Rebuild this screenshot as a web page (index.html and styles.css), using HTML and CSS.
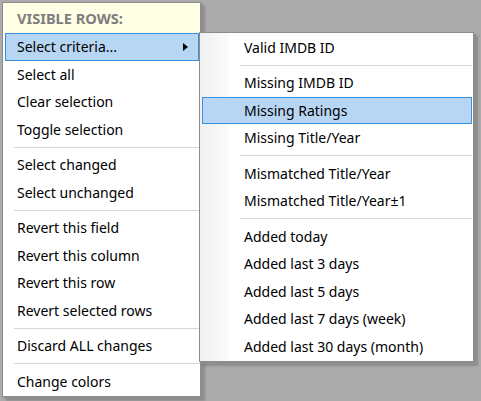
FILE: index.html
```html
<!DOCTYPE html>
<html>
<head>
<meta charset="utf-8">
<link rel="stylesheet" href="styles.css">
</head>
<body>
<div class="menu main">
  <div class="header">VISIBLE ROWS:</div>
  <div class="item active has-sub">
    <span>Select criteria...</span>
    <svg class="chev" width="5" height="8" viewBox="0 0 5 8"><path d="M0 0 L5 4 L0 8 Z" fill="#000"/></svg>
    <div class="menu sub">
      <div class="item">Valid IMDB ID</div>
      <div class="sep"></div>
      <div class="item">Missing IMDB ID</div>
      <div class="item hover">Missing Ratings</div>
      <div class="item">Missing Title/Year</div>
      <div class="sep"></div>
      <div class="item">Mismatched Title/Year</div>
      <div class="item">Mismatched Title/Year±1</div>
      <div class="sep"></div>
      <div class="item">Added today</div>
      <div class="item">Added last 3 days</div>
      <div class="item">Added last 5 days</div>
      <div class="item">Added last 7 days (week)</div>
      <div class="item">Added last 30 days (month)</div>
    </div>
  </div>
  <div class="item">Select all</div>
  <div class="item">Clear selection</div>
  <div class="item">Toggle selection</div>
  <div class="sep"></div>
  <div class="item">Select changed</div>
  <div class="item">Select unchanged</div>
  <div class="sep"></div>
  <div class="item">Revert this field</div>
  <div class="item">Revert this column</div>
  <div class="item">Revert this row</div>
  <div class="item">Revert selected rows</div>
  <div class="sep"></div>
  <div class="item">Discard ALL changes</div>
  <div class="sep"></div>
  <div class="item">Change colors</div>
</div>
</body>
</html>
```
FILE: styles.css
```css
html, body {
  margin: 0;
  padding: 0;
  background: #ababab;
  width: 481px;
  height: 401px;
  overflow: hidden;
}
body {
  padding: 2px 0 0 2px;
  box-sizing: border-box;
  font-family: "Noto Sans", "Open Sans", sans-serif;
  font-size: 14px;
  color: #000;
}
.menu {
  background: #fff;
  border: 1px solid #8c8c8c;
  box-shadow: 2px 2px 0 #8e8e8e, 4px 4px 2px rgba(0,0,0,0.18);
}
.main {
  width: 197px;
  padding-bottom: 0.5px;
  position: relative;
}
.header {
  background: #ffffe6;
  height: 30px;
  line-height: 30px;
  padding-left: 14px;
  font-weight: bold;
  font-size: 14.6px;
  color: #7d7d7d;
}
.item {
  height: 27.5px;
  line-height: 27.5px;
  box-sizing: border-box;
  padding-left: 14px;
  white-space: nowrap;
}
.main .item {
  margin: 0 1px 0 2px;
  padding-left: 12px;
}
.item.active {
  background: #b7d6f4;
  outline: 1px solid #3c8fde;
  outline-offset: -1px;
  position: relative;
  display: flex;
  align-items: center;
}
.item.active span { flex: 1; line-height: 27.5px; }
.chev { margin-right: 11px; }
.sep {
  height: 8px;
  display: flex;
  align-items: center;
}
.sep::before {
  content: "";
  flex: 1;
  height: 1px;
  background: #d5d5d5;
}
.main .sep::before { margin-left: 11px; }
.sub {
  position: absolute;
  left: 194px;
  top: -1px;
  width: 273px;
  padding-top: 0.5px;
  padding-bottom: 0.5px;
  background: linear-gradient(to right, #f0f0f0, #fbfbfb 28px, #fff 29px);
  line-height: normal;
}
.sub .item {
  margin: 0 1px 0 2px;
  padding-left: 42px;
}
.sub .item.hover {
  background: #b7d6f4;
  outline: 1px solid #3c8fde;
  outline-offset: -1px;
}
.sub .sep::before { margin-left: 40px; margin-right: 1px; }
```
